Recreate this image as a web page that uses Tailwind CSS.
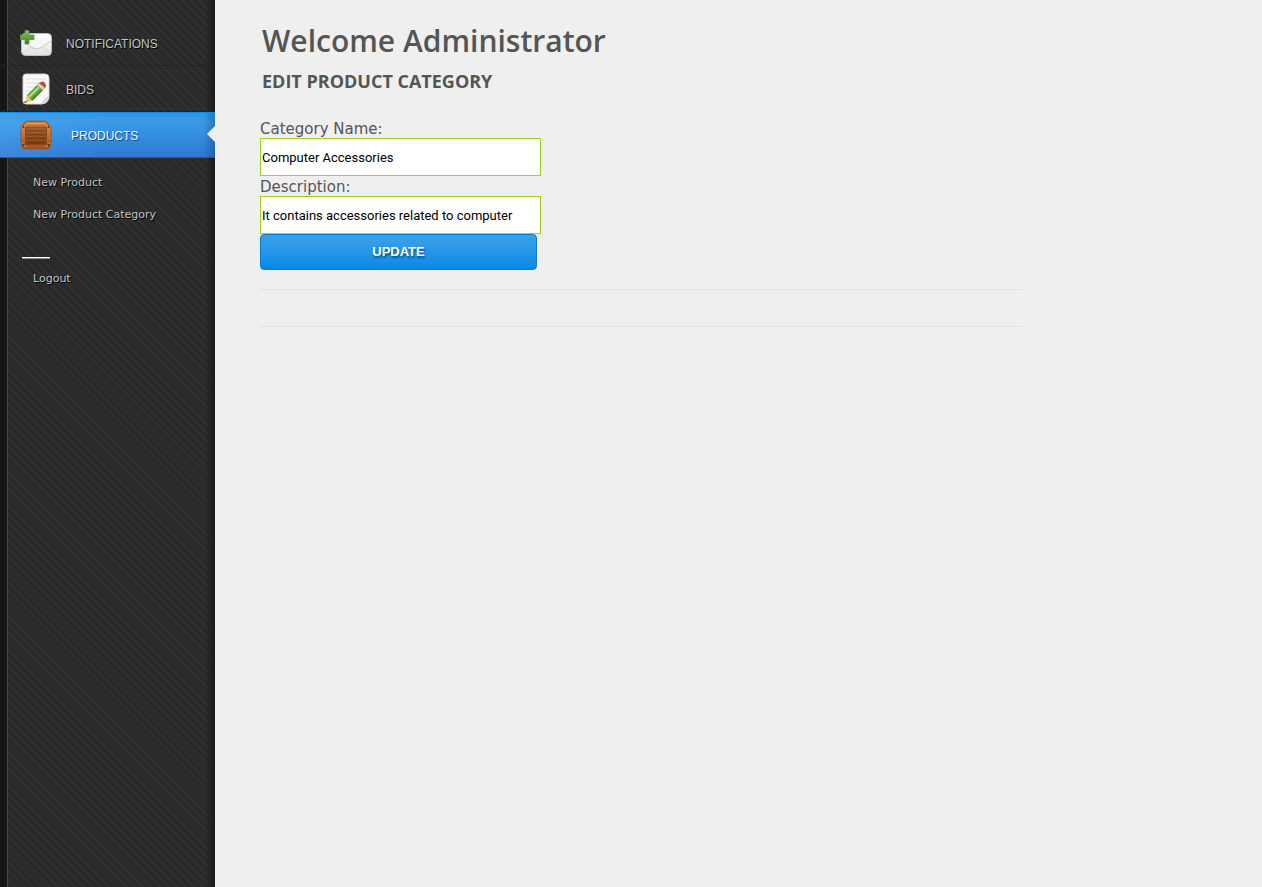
<!DOCTYPE html>
<html lang="en">
<head>
<meta charset="utf-8">
<meta name="viewport" content="width=device-width, initial-scale=1">
<title>Edit Product Category</title>
<script src="https://cdn.jsdelivr.net/npm/@tailwindcss/browser@4"></script>
</head>
<body class="flex min-h-screen bg-[#efefef] text-[#555555] font-['Open_Sans',sans-serif]">
<aside class="w-[215px] shrink-0 pt-5 bg-[linear-gradient(90deg,#171717_0,#171717_7px,#484848_7px,#484848_8px,transparent_8px,transparent_205px,#191919_215px),repeating-linear-gradient(45deg,#2a2a2a_0,#2a2a2a_5px,#333333_5px,#333333_6px)]">
  <nav aria-label="Main">
    <ul class="font-['Liberation_Sans',sans-serif] text-xs text-[#c4c4c4] [text-shadow:1px_1px_0_#000]">
      <li>
        <a href="#" class="flex h-[46px] items-center gap-3 border-b border-[#232323] pl-5">
          <svg class="h-8 w-8" viewBox="0 0 32 32" aria-hidden="true">
            <defs><linearGradient id="mail" x2="0" y2="1"><stop stop-color="#fff"/><stop offset="1" stop-color="#e2e2e2"/></linearGradient>
            <linearGradient id="plus" x2="0" y2="1"><stop stop-color="#91c56c"/><stop offset="1" stop-color="#347d18"/></linearGradient></defs>
            <rect x="1.5" y="6.500" width="30" height="22" rx="4" fill="url(#mail)" stroke="#bcbcbc"/>
            <path d="M3 26l9-7M30 26l-9-7" stroke="#dadada" fill="none"/>
            <path d="M2 14l11 7q3.500 2 7 0L31 14" fill="#f6f6f6" stroke="#c8c8c8"/>
            <path d="M5 3.500h4V8h5v4.500H9V17H5v-4.500H0V8h5z" fill="url(#plus)" stroke="#58933c" stroke-width=".8"/>
          </svg>
          <span class="pt-[2px] pl-[2px]">NOTIFICATIONS</span>
        </a>
      </li>
      <li>
        <a href="#" class="flex h-[46px] items-center gap-3 border-b border-[#232323] pl-5">
          <svg class="h-8 w-8" viewBox="0 0 32 32" aria-hidden="true">
            <path d="M6 1h19q4 0 4 4v18q0 7-7 8H6q-3 0-3-3V4q0-3 3-3z" fill="#f9f9f9" stroke="#d2d2d2"/>
            <path d="M6 6h20M6 10h20M6 14h18M6 18h16M6 22h12" stroke="#dedede"/>
            <path d="M22 31q0-6 7-8-1 7-7 8z" fill="#dadada"/>
            <path d="M7 22l5 6-7 2z" fill="#f4be75"/><path d="M5 28l2 1-3 1z" fill="#3b3026"/>
            <path d="M7 22L17 12l6 5-11 11z" fill="#65a93a"/><path d="M9 24L19 14" stroke="#b7dc85" stroke-width="2"/><path d="M12 27L22 17" stroke="#397c20" stroke-width="1.500"/>
            <path d="M17 12l2-2 6 5-2 2z" fill="#d9d9cc" stroke="#96968c" stroke-width=".6"/>
            <path d="M19 10q4-3 6 0 2 3 0 5z" fill="#c94b28"/>
          </svg>
          <span class="pt-[2px] pl-[2px]">BIDS</span>
        </a>
      </li>
      <li>
        <a href="#" aria-current="page" class="relative flex h-[46px] items-center gap-3 border-t border-b border-t-[#0a8df0] border-b-[#1d5aa8] bg-[linear-gradient(90deg,rgba(120,190,255,0.2),transparent_50%,transparent_203px,rgba(0,40,90,0.3)),linear-gradient(#3596de,#399be7_20%,#2f78d2)] pl-5 text-[#f2faff] [text-shadow:1px_1px_0_#124a72]">
          <svg class="h-8 w-8" viewBox="0 0 32 32" aria-hidden="true">
            <defs><linearGradient id="wood" x2="0" y2="1"><stop stop-color="#b0652b"/><stop offset=".25" stop-color="#cf813f"/><stop offset="1" stop-color="#a0521e"/></linearGradient>
            <linearGradient id="slats" x2="0" y2="1"><stop stop-color="#a9632f"/><stop offset="1" stop-color="#74360f"/></linearGradient></defs>
            <path d="M8 2h16q5 1 7 6v17q0 5-5 5H6q-5 0-5-5V8q2-5 7-6z" fill="url(#wood)" stroke="#9c5320" stroke-width=".8"/>
            <path d="M6 4.500h20" stroke="#e2a462" stroke-width="1.500"/>
            <rect x="5.500" y="8" width="21" height="17.500" rx="1" fill="url(#slats)" stroke="#854316" stroke-width=".8"/>
            <path d="M6 12h20M6 16h20M6 20h20" stroke="#6d3512"/>
            <path d="M6 13h20M6 17h20M6 21h20" stroke="#b66c35" stroke-width=".6"/>
            <path d="M2 9l4-3M30 9l-4-3M2 24l4 4M30 24l-4 4" stroke="#e9a661"/>
            <g fill="#56280e"><circle cx="3.500" cy="8" r="1"/><circle cx="28.500" cy="8" r="1"/><circle cx="3.500" cy="26" r="1"/><circle cx="28.500" cy="26" r="1"/></g>
          </svg>
          <span class="pt-[2px] pl-[7px]">PRODUCTS</span>
          <svg class="absolute right-0 top-[13px] h-4 w-2" viewBox="0 0 8 16" aria-hidden="true"><path d="M8 0v16L0 8z" fill="#efefef"/></svg>
        </a>
      </li>
    </ul>
    <ul class="pt-[9px] font-['DejaVu_Sans',sans-serif] text-[11px] text-[#c4c4c4] [text-shadow:1px_1px_0_#000]">
      <li><a href="#" class="flex h-8 items-center pl-[33px]">New Product</a></li>
      <li><a href="#" class="flex h-8 items-center pl-[33px]">New Product Category</a></li>
    </ul>
    <hr class="mt-[26px] ml-[22px] h-[2px] w-7 border-0 border-t border-white bg-[#8b8b8b]">
    <a href="#" class="mt-1 flex h-8 items-center pl-[33px] font-['DejaVu_Sans',sans-serif] text-[11px] text-[#c4c4c4] [text-shadow:1px_1px_0_#000]">Logout</a>
  </nav>
</aside>
<main class="min-w-0 flex-1 pl-[45px] pt-[21px]">
  <h1 class="pl-[2px] text-[30px] leading-10 font-semibold">Welcome Administrator</h1>
  <h2 class="mt-2 pl-[2px] text-lg leading-6 font-bold">EDIT PRODUCT CATEGORY</h2>
  <form class="mt-[26px]">
    <label for="name" class="block text-[15px] leading-5 font-['DejaVu_Sans',sans-serif]">Category Name:</label>
    <input id="name" type="text" value="Computer Accessories" class="-mt-px block h-[38px] w-[281px] border border-[#99d51c] bg-white px-px font-['Roboto',sans-serif] text-[13px] text-black">
    <label for="description" class="block pt-px text-[15px] leading-5 font-['DejaVu_Sans',sans-serif]">Description:</label>
    <input id="description" type="text" value="It contains accessories related to computer" class="-mt-px block h-[38px] w-[281px] border border-[#99d51c] bg-white px-px font-['Roboto',sans-serif] text-[13px] text-black">
    <button type="submit" class="block h-9 w-[277px] rounded border border-[#087fd0] bg-linear-to-b from-[#3ba2e9] to-[#0089e8] font-['Liberation_Sans',sans-serif] text-[13px] font-bold text-white [text-shadow:1px_2px_2px_#085083]">UPDATE</button>
  </form>
  <div class="mt-[19px] h-[38px] max-w-[763px] border-y border-[#e2e2e2]"></div>
</main>
</body>
</html>
